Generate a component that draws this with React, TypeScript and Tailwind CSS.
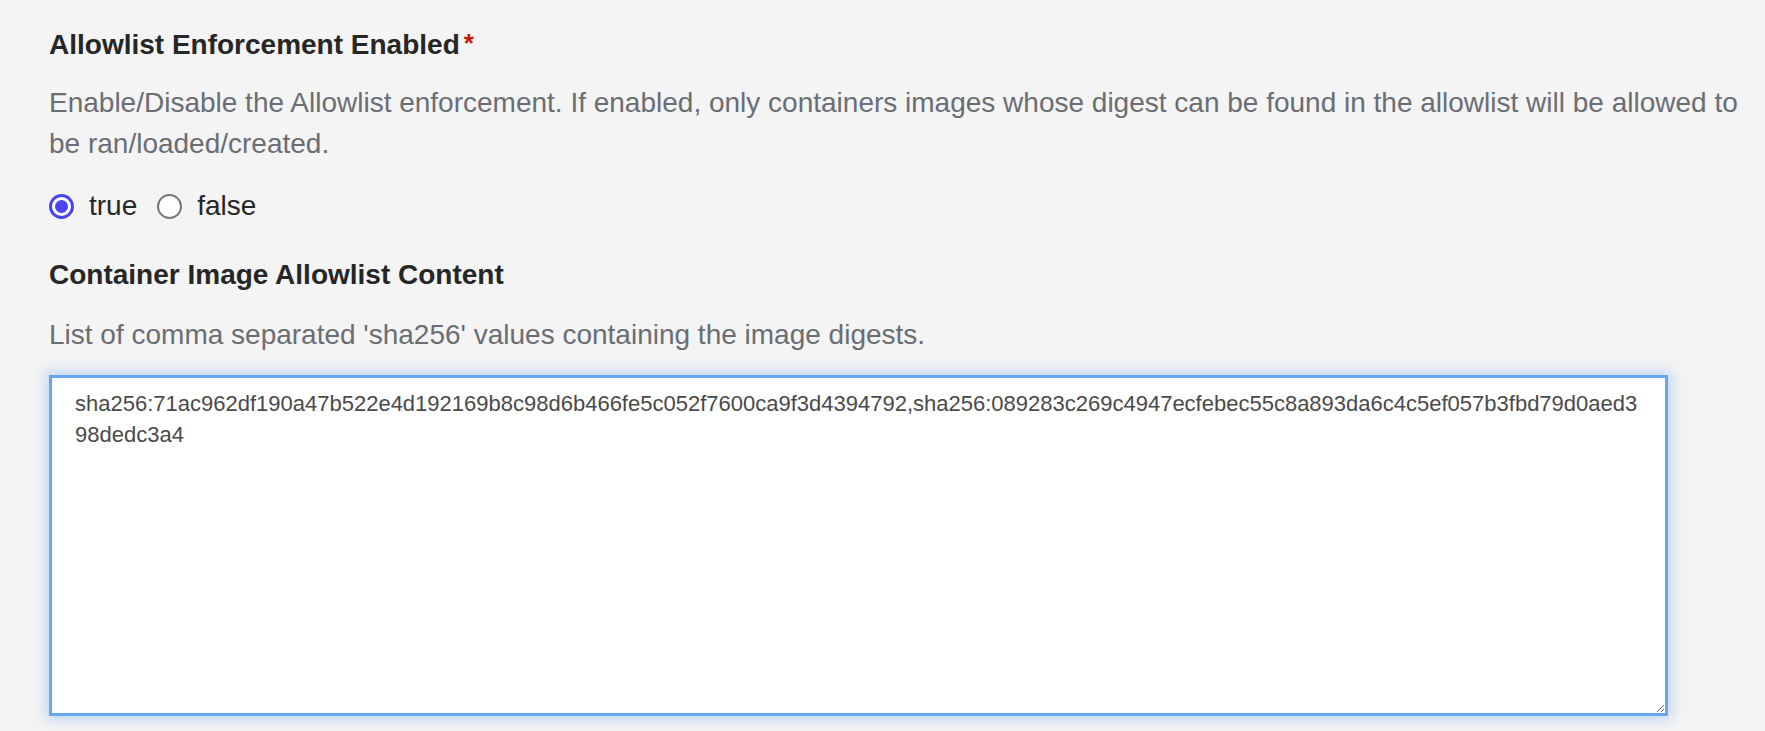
import { useEffect, useRef, useState } from 'react';

const DIGESTS =
  'sha256:71ac962df190a47b522e4d192169b8c98d6b466fe5c052f7600ca9f3d4394792,sha256:089283c269c4947ecfebec55c8a893da6c4c5ef057b3fbd79d0aed398dedc3a4';

type RadioProps = {
  label: string;
  checked: boolean;
  onSelect: () => void;
};

function Radio({ label, checked, onSelect }: RadioProps) {
  return (
    <label className="flex items-center gap-[15px] cursor-pointer" onClick={onSelect}>
      {checked ? (
        <span className="w-[25px] h-[25px] rounded-full border-[3px] border-[#4a44f2] bg-white flex items-center justify-center">
          <span className="w-[13px] h-[13px] rounded-full bg-[#4a44f2]" />
        </span>
      ) : (
        <span className="w-[25px] h-[25px] rounded-full border-2 border-[#767676] bg-white" />
      )}
      <span className="text-[28px] text-[#262626]">{label}</span>
    </label>
  );
}

export default function App() {
  const [enabled, setEnabled] = useState(true);
  const areaRef = useRef<HTMLTextAreaElement>(null);

  // put the caret at the end of the value, like the reference
  useEffect(() => {
    const el = areaRef.current;
    if (el) {
      el.focus();
      el.setSelectionRange(el.value.length, el.value.length);
    }
  }, []);

  return (
    <div
      className="min-h-screen bg-[#f4f4f4] pl-[49px] pr-[20px] pt-[28px]"
      style={{ fontFamily: '"Liberation Sans", Arial, sans-serif' }}
    >
      {/* Enforcement toggle */}
      <div className="flex items-start">
        <span className="text-[28px] leading-[34px] font-bold text-[#262626]">
          Allowlist Enforcement Enabled
        </span>
        <span className="ml-[4px] text-[26px] leading-[30px] font-bold text-[#c9190b]">*</span>
      </div>
      <p className="mt-[21px] text-[28px] leading-[40.5px] text-[#6a6e73]">
        Enable/Disable the Allowlist enforcement. If enabled, only containers images whose digest can be found in the
        allowlist will be allowed to be ran/loaded/created.
      </p>
      <div className="mt-[22px] h-[40px] flex items-center gap-[20px]">
        <Radio label="true" checked={enabled} onSelect={() => setEnabled(true)} />
        <Radio label="false" checked={!enabled} onSelect={() => setEnabled(false)} />
      </div>

      {/* Allowlist content */}
      <div className="mt-[32px] text-[28px] leading-[34px] font-bold text-[#262626]">
        Container Image Allowlist Content
      </div>
      <p className="mt-[23px] text-[28px] leading-[40.5px] text-[#6a6e73]">
        List of comma separated 'sha256' values containing the image digests.
      </p>
      <textarea
        ref={areaRef}
        className="mt-[19px] block w-[1619px] h-[341px] bg-white border-[3px] border-[#66a8f0] shadow-[0_0_12px_4px_rgba(102,168,240,0.35)] outline-none pl-[23px] pr-[23px] pt-[10px] text-[22px] leading-[31.5px] text-[#4a4a4a] caret-[#222222]"
        style={{ fontFamily: '"Liberation Sans", Arial, sans-serif' }}
        defaultValue={DIGESTS}
        spellCheck={false}
      />
    </div>
  );
}
